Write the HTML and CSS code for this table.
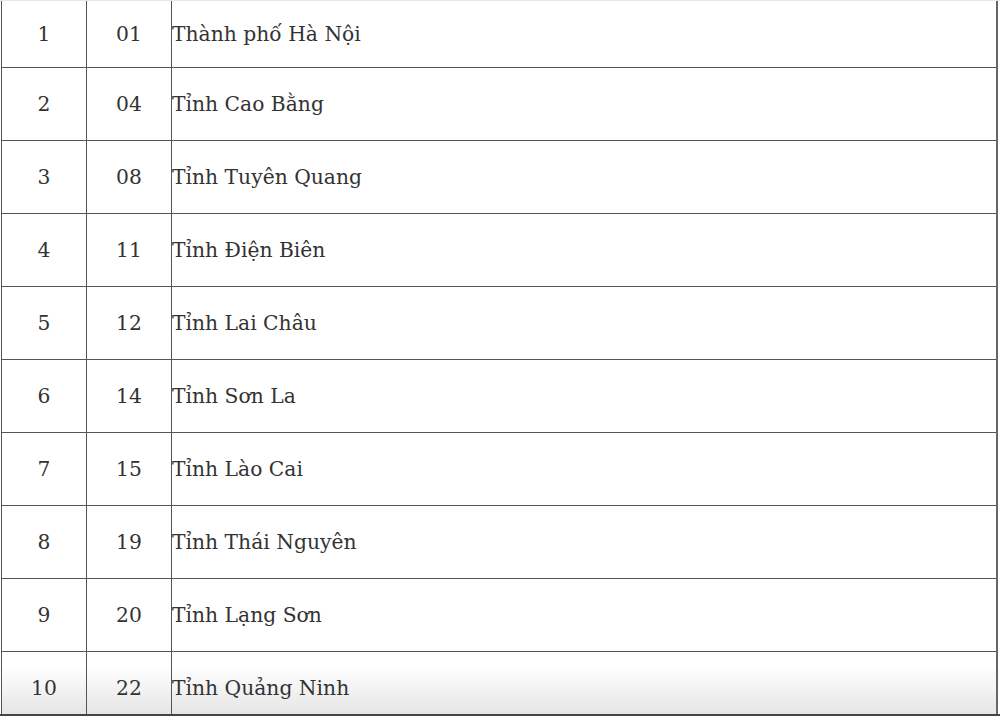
FILE: index.html
```html
<!DOCTYPE html>
<html lang="vi">
<head>
<meta charset="utf-8">
<title>Danh sách tỉnh</title>
<link rel="stylesheet" href="styles.css">
</head>
<body>
<div class="page">
<table class="list">
<colgroup><col class="c1"><col class="c2"><col class="c3"></colgroup>
<tbody>
<tr class="first"><td class="num">1</td><td class="num">01</td><td class="name">Thành phố Hà Nội</td></tr>
<tr><td class="num">2</td><td class="num">04</td><td class="name">Tỉnh Cao Bằng</td></tr>
<tr><td class="num">3</td><td class="num">08</td><td class="name">Tỉnh Tuyên Quang</td></tr>
<tr><td class="num">4</td><td class="num">11</td><td class="name">Tỉnh Điện Biên</td></tr>
<tr><td class="num">5</td><td class="num">12</td><td class="name">Tỉnh Lai Châu</td></tr>
<tr><td class="num">6</td><td class="num">14</td><td class="name">Tỉnh Sơn La</td></tr>
<tr><td class="num">7</td><td class="num">15</td><td class="name">Tỉnh Lào Cai</td></tr>
<tr><td class="num">8</td><td class="num">19</td><td class="name">Tỉnh Thái Nguyên</td></tr>
<tr><td class="num">9</td><td class="num">20</td><td class="name">Tỉnh Lạng Sơn</td></tr>
<tr class="last"><td class="num">10</td><td class="num">22</td><td class="name">Tỉnh Quảng Ninh</td></tr>
</tbody>
</table>
</div>
</body>
</html>
```
FILE: styles.css
```css
html, body {
  margin: 0;
  padding: 0;
  background: #ffffff;
}
.page {
  width: 1000px;
  height: 716px;
  overflow: hidden;
  border-top: 1px solid #e6e6e6;
  border-bottom: 2px solid #444444;
  box-sizing: border-box;
}
.list {
  border-collapse: collapse;
  table-layout: fixed;
  width: 997px;
  margin-left: 1px;
  font-family: "DejaVu Serif", "Liberation Serif", serif;
  font-size: 20.3px;
  color: #333333;
}
.c1 { width: 85px; }
.c2 { width: 85px; }
.list td {
  border: 1px solid #555555;
  height: 73px;
  padding: 0;
  box-sizing: border-box;
  vertical-align: middle;
}
.list td:last-child {
  border-right: 2px solid #666666;
}
.list .first td {
  border-top: none;
  height: 66px;
}
.list .last td {
  background: linear-gradient(to bottom, #ffffff 0%, #ffffff 20%, #e8e8e8 80%, #e2e2e2 100%);
}
.num {
  text-align: center;
}
.name {
  text-align: left;
}
```
